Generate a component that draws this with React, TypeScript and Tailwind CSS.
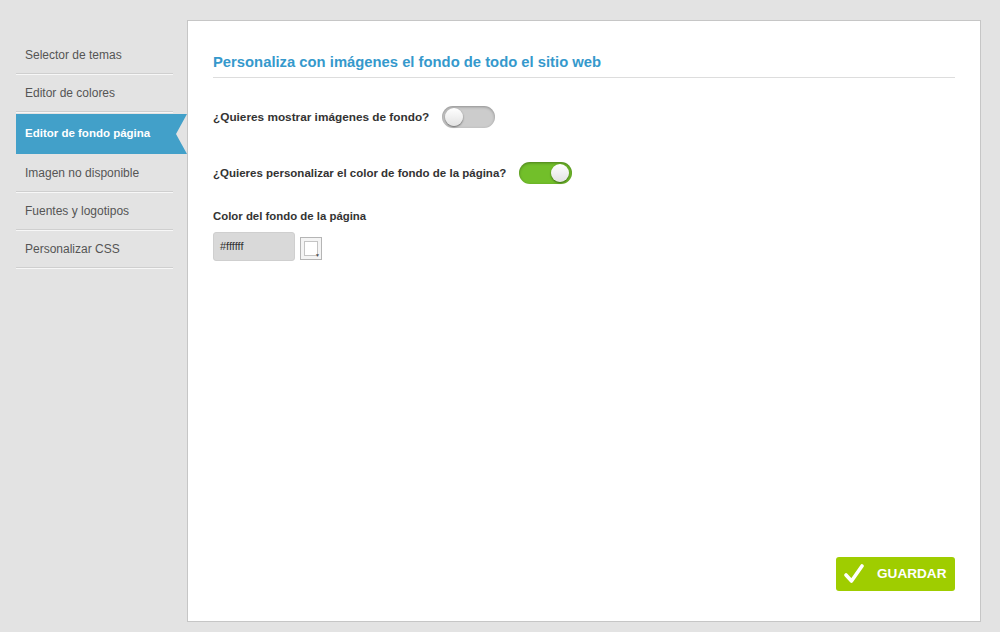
import React from 'react';

const menu = [
  'Selector de temas',
  'Editor de colores',
  'Editor de fondo página',
  'Imagen no disponible',
  'Fuentes y logotipos',
  'Personalizar CSS',
];

function Toggle({ on }: { on: boolean }) {
  return (
    <div
      className={`relative w-[53px] h-[22px] rounded-full ${
        on
          ? 'bg-[#72bf2a] shadow-[inset_0_1px_3px_rgba(0,0,0,0.35)]'
          : 'bg-[#cccccc] shadow-[inset_0_1px_3px_rgba(0,0,0,0.3)]'
      }`}
    >
      <div
        className={`absolute top-[2px] w-[18px] h-[18px] rounded-full bg-gradient-to-b from-white to-[#e2e2e2] shadow-[0_1px_2px_rgba(0,0,0,0.5)] ${
          on ? 'right-[3px]' : 'left-[3px]'
        }`}
      />
    </div>
  );
}

export default function App() {
  return (
    <div
      className="w-[1000px] h-[632px] bg-[#e3e3e3] flex pt-[20px] pl-[16px]"
      style={{ fontFamily: '"Liberation Sans", Arial, sans-serif' }}
    >
      {/* Sidebar */}
      <div className="w-[171px] pt-[16px] flex flex-col">
        {menu.map((item, idx) => {
          const active = idx === 2;
          if (active) {
            return (
              <div
                key={idx}
                className="h-[40px] mt-[2px] bg-[#42a0c9] text-white font-bold text-[11.5px] flex items-center pl-[9px]"
                style={{ clipPath: 'polygon(0 0, 100% 0, calc(100% - 11px) 50%, 100% 100%, 0 100%)' }}
              >
                {item}
              </div>
            );
          }
          return (
            <div
              key={idx}
              className="w-[157px] h-[38px] flex items-center pl-[9px] text-[12px] text-[#555555] border-b border-[#cfcfcf] shadow-[0_1px_0_#f7f7f7]"
            >
              {item}
            </div>
          );
        })}
      </div>

      {/* Panel */}
      <div className="w-[794px] h-[602px] bg-white border border-[#c6c6c6] flex flex-col">
        <div className="flex-1 px-[25px] pt-[33px]">
          <div className="text-[14.8px] leading-[16px] font-bold text-[#3599cc] pb-[7px] border-b border-[#dddddd]">
            Personaliza con imágenes el fondo de todo el sitio web
          </div>

          <div className="mt-[28px] flex items-center gap-[13px]">
            <span className="text-[11.8px] font-bold text-[#333333] pt-[2px]">¿Quieres mostrar imágenes de fondo?</span>
            <Toggle on={false} />
          </div>

          <div className="mt-[34px] flex items-center gap-[13px]">
            <span className="text-[11.5px] font-bold text-[#333333] pt-[2px]">
              ¿Quieres personalizar el color de fondo de la página?
            </span>
            <Toggle on={true} />
          </div>

          <div className="mt-[25px] text-[11.4px] leading-[14px] font-bold text-[#333333]">
            Color del fondo de la página
          </div>

          <div className="mt-[9px] flex items-center gap-[5px]">
            <div className="w-[82px] h-[29px] rounded-[3px] bg-[#d9d9d9] border border-[#cfcfcf] flex items-center pl-[6px] text-[11px] text-[#333333]">
              #ffffff
            </div>
            <div className="relative w-[22px] h-[23px] border border-[#b5b5b5] bg-[#f4f4f4] p-[3px] mt-[4px]">
              <div className="w-full h-full bg-white border border-[#c4c4c4]" />
              <span className="absolute right-[1px] bottom-[1px] text-[5px] leading-[5px] text-[#555]">▼</span>
            </div>
          </div>
        </div>

        <div className="flex justify-end pr-[25px] pb-[30px]">
          <button className="w-[119px] h-[34px] rounded-[3px] bg-[#9fcd00] flex items-center pl-[8px] gap-[13px] text-white font-bold text-[13.6px]">
            <svg width="20" height="20" viewBox="0 0 20 20">
              <path d="M2 11 L7.5 17 L18 2" fill="none" stroke="#ffffff" strokeWidth="3.6" strokeLinecap="round" strokeLinejoin="round" />
            </svg>
            GUARDAR
          </button>
        </div>
      </div>
    </div>
  );
}
